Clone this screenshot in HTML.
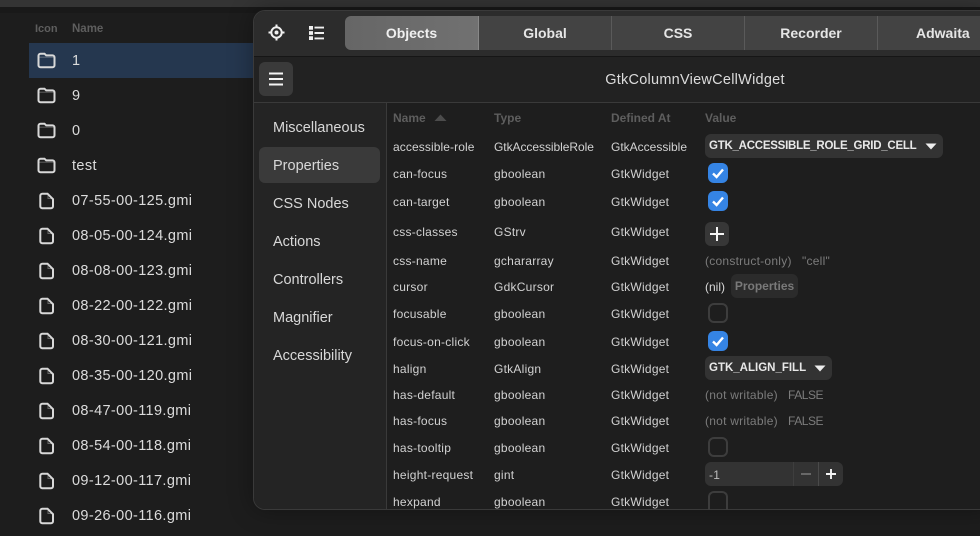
<!DOCTYPE html>
<html><head><meta charset="utf-8">
<style>
html,body{margin:0;padding:0;background:#1c1c1c;}
#p{position:relative;width:980px;height:536px;overflow:hidden;background:#1d1d1d;font-family:"Liberation Sans",sans-serif;color:#dedede;}
.a{position:absolute;}
.t{position:absolute;white-space:nowrap;line-height:20px;height:20px;margin-top:1px;}
.l{font-size:14.5px;color:#dcdcdc;left:72px;letter-spacing:.37px;}
.s{font-size:14.5px;color:#d8d8d8;left:273px;}
.c{font-size:12px;color:#d2d2d2;letter-spacing:.25px;}
.h{font-size:12px;font-weight:bold;color:#5e5e5e;}
.g{font-size:12px;color:#7c7c7c;letter-spacing:.25px;}
.tab{position:absolute;top:16px;height:34px;line-height:34px;text-align:center;font-size:14px;font-weight:bold;color:#e6e6e6;background:#434343;border-right:1px solid #5a5a5a;box-sizing:border-box;}
.cb{position:absolute;left:708px;width:20px;height:20px;box-sizing:border-box;border-radius:6px;}
.on{background:#3584e4;}
.off{border:2px solid #3d3d3d;}
.dd{position:absolute;left:705px;height:24px;background:#333;border-radius:6px;font-size:11.5px;letter-spacing:-.25px;font-weight:bold;color:#e8e8e8;line-height:25px;padding-left:4px;box-sizing:border-box;white-space:nowrap;}
svg{position:absolute;display:block;}
</style></head><body><div id="p">
<div class="a" style="left:0;top:0;width:980px;height:7px;background:#343434"></div>
<div class="a" style="left:0;top:7px;width:980px;height:6px;background:#191919"></div>

<div class="t h" style="left:35px;top:18px;font-size:11px">Icon</div>
<div class="t h" style="left:72px;top:18px;font-size:11.5px">Name</div>
<div class="a" style="left:29px;top:43px;width:230px;height:35px;background:#25374f"></div>

<svg width="0" height="0" style="position:absolute"><defs>
<symbol id="fo" viewBox="0 0 19 17"><path d="M3.5 1.7H7.5L9.2 3.4H15.5A2 2 0 0 1 17.5 5.4V13.3A2 2 0 0 1 15.5 15.3H3.5A2 2 0 0 1 1.5 13.3V3.7A2 2 0 0 1 3.5 1.7Z" fill="none" stroke="#d8d8d8" stroke-width="2"/><path d="M2 5.2H17" stroke="#d8d8d8" stroke-opacity=".35" stroke-width="1"/></symbol>
<symbol id="fi" viewBox="0 0 15 18"><path d="M3.3 1.7H8.5L14 7.2V14.3A2 2 0 0 1 12 16.3H3.3A2 2 0 0 1 1.3 14.3V3.7A2 2 0 0 1 3.3 1.7Z" fill="none" stroke="#d8d8d8" stroke-width="2"/><path d="M9 2V6.5H13.5" fill="none" stroke="#d8d8d8" stroke-opacity=".4" stroke-width="1"/></symbol>
<symbol id="ck" viewBox="0 0 20 20"><path d="M5 10.5L8.6 14L15 6.5" fill="none" stroke="#fff" stroke-width="2.4"/></symbol>
</defs></svg>

<svg style="left:37px;top:52px" width="19" height="17"><use href="#fo"/></svg>
<svg style="left:37px;top:87px" width="19" height="17"><use href="#fo"/></svg>
<svg style="left:37px;top:122px" width="19" height="17"><use href="#fo"/></svg>
<svg style="left:37px;top:157px" width="19" height="17"><use href="#fo"/></svg>
<svg style="left:39px;top:192px" width="15" height="18"><use href="#fi"/></svg>
<svg style="left:39px;top:227px" width="15" height="18"><use href="#fi"/></svg>
<svg style="left:39px;top:262px" width="15" height="18"><use href="#fi"/></svg>
<svg style="left:39px;top:297px" width="15" height="18"><use href="#fi"/></svg>
<svg style="left:39px;top:332px" width="15" height="18"><use href="#fi"/></svg>
<svg style="left:39px;top:367px" width="15" height="18"><use href="#fi"/></svg>
<svg style="left:39px;top:402px" width="15" height="18"><use href="#fi"/></svg>
<svg style="left:39px;top:437px" width="15" height="18"><use href="#fi"/></svg>
<svg style="left:39px;top:472px" width="15" height="18"><use href="#fi"/></svg>
<svg style="left:39px;top:507px" width="15" height="18"><use href="#fi"/></svg>

<div class="t l" style="top:50px">1</div>
<div class="t l" style="top:85px">9</div>
<div class="t l" style="top:120px">0</div>
<div class="t l" style="top:155px">test</div>
<div class="t l" style="top:190px">07-55-00-125.gmi</div>
<div class="t l" style="top:225px">08-05-00-124.gmi</div>
<div class="t l" style="top:260px">08-08-00-123.gmi</div>
<div class="t l" style="top:295px">08-22-00-122.gmi</div>
<div class="t l" style="top:330px">08-30-00-121.gmi</div>
<div class="t l" style="top:365px">08-35-00-120.gmi</div>
<div class="t l" style="top:400px">08-47-00-119.gmi</div>
<div class="t l" style="top:435px">08-54-00-118.gmi</div>
<div class="t l" style="top:470px">09-12-00-117.gmi</div>
<div class="t l" style="top:505px">09-26-00-116.gmi</div>

<!-- window -->
<div class="a" style="left:253px;top:10px;width:740px;height:500px;background:#1e1e1e;border:1px solid #3a3a3a;border-radius:12px;box-sizing:border-box;overflow:hidden;box-shadow:0 0 24px rgba(0,0,0,.35)">
  <div class="a" style="left:0;top:0;width:740px;height:45px;background:#2c2c2c;border-bottom:1px solid #161616"></div>
  <div class="a" style="left:0;top:46px;width:740px;height:45px;background:#222"></div>
  <div class="a" style="left:0;top:91px;width:740px;height:1px;background:#3a3a3a"></div>
  <div class="a" style="left:0;top:92px;width:132px;height:408px;background:#242424"></div>
  <div class="a" style="left:132px;top:92px;width:1px;height:408px;background:#3a3a3a"></div>
</div>

<svg style="left:268px;top:24px" width="17" height="17" viewBox="0 0 17 17"><circle cx="8.5" cy="8.5" r="5.2" fill="none" stroke="#f0f0f0" stroke-width="2"/><circle cx="8.5" cy="8.5" r="2" fill="#f0f0f0"/><path d="M8.5 0.5V3.5M8.5 13.5V16.5M0.5 8.5H3.5M13.5 8.5H16.5" stroke="#f0f0f0" stroke-width="2"/></svg>
<svg style="left:309px;top:26px" width="15" height="14" viewBox="0 0 15 14"><path d="M0 0H4V3.8H0ZM0 5.1H4V8.9H0ZM0 10.2H4V14H0Z" fill="#f0f0f0"/><path d="M5.5 1.6H15M5.5 7H15M5.5 12.4H15" stroke="#f0f0f0" stroke-width="1.9"/></svg>

<div class="tab" style="left:345px;width:134px;background:linear-gradient(90deg,#666,#717171);border-radius:6px 0 0 6px;color:#f0f0f0;border-right:1px solid #888">Objects</div>
<div class="tab" style="left:479px;width:133px">Global</div>
<div class="tab" style="left:612px;width:133px">CSS</div>
<div class="tab" style="left:745px;width:133px">Recorder</div>
<div class="tab" style="left:878px;width:102px;border-right:0;padding-right:0;text-align:left;padding-left:38px">Adwaita</div>

<div class="a" style="left:259px;top:62px;width:34px;height:34px;background:#3a3a3a;border-radius:6px"></div>
<svg style="left:269px;top:72px" width="14" height="14" viewBox="0 0 14 14"><path d="M0 1.5H14M0 7H14M0 12.5H14" stroke="#f4f4f4" stroke-width="2"/></svg>
<div class="t" style="left:595px;width:200px;text-align:center;top:69px;font-size:14.5px;letter-spacing:.25px;color:#dcdcdc">GtkColumnViewCellWidget</div>

<div class="a" style="left:259px;top:147px;width:121px;height:36px;background:#3a3a3a;border-radius:6px"></div>
<div class="t s" style="top:117px">Miscellaneous</div>
<div class="t s" style="top:155px">Properties</div>
<div class="t s" style="top:193px">CSS Nodes</div>
<div class="t s" style="top:231px">Actions</div>
<div class="t s" style="top:269px">Controllers</div>
<div class="t s" style="top:307px">Magnifier</div>
<div class="t s" style="top:345px">Accessibility</div>

<div class="t h" style="left:393px;top:107px">Name</div>
<svg style="left:434px;top:114px" width="13" height="8" viewBox="0 0 13 8"><path d="M6.5 0.5L12.5 7H0.5Z" fill="#4c4c4c"/></svg>
<div class="t h" style="left:494px;top:107px">Type</div>
<div class="t h" style="left:611px;top:107px">Defined At</div>
<div class="t h" style="left:705px;top:107px">Value</div>

<div class="t c" style="left:393px;top:136px;letter-spacing:.1px">accessible-role</div><div class="t c" style="left:494px;top:136px;letter-spacing:-.05px">GtkAccessibleRole</div><div class="t c" style="left:611px;top:136px;letter-spacing:0">GtkAccessible</div>
<div class="t c" style="left:393px;top:163px">can-focus</div><div class="t c" style="left:494px;top:163px">gboolean</div><div class="t c" style="left:611px;top:163px">GtkWidget</div>
<div class="t c" style="left:393px;top:191px">can-target</div><div class="t c" style="left:494px;top:191px">gboolean</div><div class="t c" style="left:611px;top:191px">GtkWidget</div>
<div class="t c" style="left:393px;top:221px">css-classes</div><div class="t c" style="left:494px;top:221px">GStrv</div><div class="t c" style="left:611px;top:221px">GtkWidget</div>
<div class="t c" style="left:393px;top:250px">css-name</div><div class="t c" style="left:494px;top:250px">gchararray</div><div class="t c" style="left:611px;top:250px">GtkWidget</div>
<div class="t c" style="left:393px;top:276px">cursor</div><div class="t c" style="left:494px;top:276px">GdkCursor</div><div class="t c" style="left:611px;top:276px">GtkWidget</div>
<div class="t c" style="left:393px;top:303px">focusable</div><div class="t c" style="left:494px;top:303px">gboolean</div><div class="t c" style="left:611px;top:303px">GtkWidget</div>
<div class="t c" style="left:393px;top:331px">focus-on-click</div><div class="t c" style="left:494px;top:331px">gboolean</div><div class="t c" style="left:611px;top:331px">GtkWidget</div>
<div class="t c" style="left:393px;top:358px">halign</div><div class="t c" style="left:494px;top:358px">GtkAlign</div><div class="t c" style="left:611px;top:358px">GtkWidget</div>
<div class="t c" style="left:393px;top:384px">has-default</div><div class="t c" style="left:494px;top:384px">gboolean</div><div class="t c" style="left:611px;top:384px">GtkWidget</div>
<div class="t c" style="left:393px;top:410px">has-focus</div><div class="t c" style="left:494px;top:410px">gboolean</div><div class="t c" style="left:611px;top:410px">GtkWidget</div>
<div class="t c" style="left:393px;top:437px">has-tooltip</div><div class="t c" style="left:494px;top:437px">gboolean</div><div class="t c" style="left:611px;top:437px">GtkWidget</div>
<div class="t c" style="left:393px;top:464px">height-request</div><div class="t c" style="left:494px;top:464px">gint</div><div class="t c" style="left:611px;top:464px">GtkWidget</div>
<div class="t c" style="left:393px;top:491px">hexpand</div><div class="t c" style="left:494px;top:491px">gboolean</div><div class="t c" style="left:611px;top:491px">GtkWidget</div>

<div class="dd" style="top:134px;width:238px">GTK_ACCESSIBLE_ROLE_GRID_CELL</div>
<svg style="left:925px;top:143px" width="12" height="7" viewBox="0 0 12 7"><path d="M0.5 0.5H11.5L6 6.5Z" fill="#eee"/></svg>
<div class="cb on" style="top:163px"><svg style="left:0;top:0" width="20" height="20"><use href="#ck"/></svg></div>
<div class="cb on" style="top:191px"><svg style="left:0;top:0" width="20" height="20"><use href="#ck"/></svg></div>
<div class="a" style="left:705px;top:222px;width:24px;height:24px;background:#373737;border-radius:6px"></div>
<svg style="left:710px;top:227px" width="14" height="14" viewBox="0 0 14 14"><path d="M7 0V14M0 7H14" stroke="#f4f4f4" stroke-width="2"/></svg>
<div class="t g" style="left:705px;top:250px">(construct-only)</div><div class="t g" style="left:802px;top:250px">"cell"</div>
<div class="t c" style="left:705px;top:276px;color:#d8d8d8;letter-spacing:0">(nil)</div>
<div class="a" style="left:731px;top:274px;width:67px;height:24px;background:#2b2b2b;border-radius:6px;font-size:12px;font-weight:bold;color:#797979;line-height:25px;text-align:center">Properties</div>
<div class="cb off" style="top:303px"></div>
<div class="cb on" style="top:331px"><svg style="left:0;top:0" width="20" height="20"><use href="#ck"/></svg></div>
<div class="dd" style="top:356px;width:127px;letter-spacing:0">GTK_ALIGN_FILL</div>
<svg style="left:814px;top:365px" width="12" height="7" viewBox="0 0 12 7"><path d="M0.5 0.5H11.5L6 6.5Z" fill="#eee"/></svg>
<div class="t g" style="left:705px;top:384px">(not writable)</div><div class="t g" style="left:788px;top:384px;letter-spacing:-.45px">FALSE</div>
<div class="t g" style="left:705px;top:410px">(not writable)</div><div class="t g" style="left:788px;top:410px;letter-spacing:-.45px">FALSE</div>
<div class="cb off" style="top:437px"></div>
<div class="a" style="left:705px;top:462px;width:138px;height:24px;background:#333;border-radius:6px"></div>
<div class="a" style="left:793px;top:462px;width:1px;height:24px;background:#3e3e3e"></div>
<div class="a" style="left:818px;top:462px;width:1px;height:24px;background:#4a4a4a"></div>
<div class="t c" style="left:709px;top:464px;color:#bdbdbd">-1</div>
<svg style="left:801px;top:469px" width="10" height="10" viewBox="0 0 10 10"><path d="M0 5H10" stroke="#6e6e6e" stroke-width="1.8"/></svg>
<svg style="left:826px;top:469px" width="10" height="10" viewBox="0 0 10 10"><path d="M5 0V10M0 5H10" stroke="#f4f4f4" stroke-width="1.9"/></svg>
<div class="cb off" style="top:491px;height:19px;border-bottom:0;border-radius:6px 6px 0 0"></div>
</div></body></html>
